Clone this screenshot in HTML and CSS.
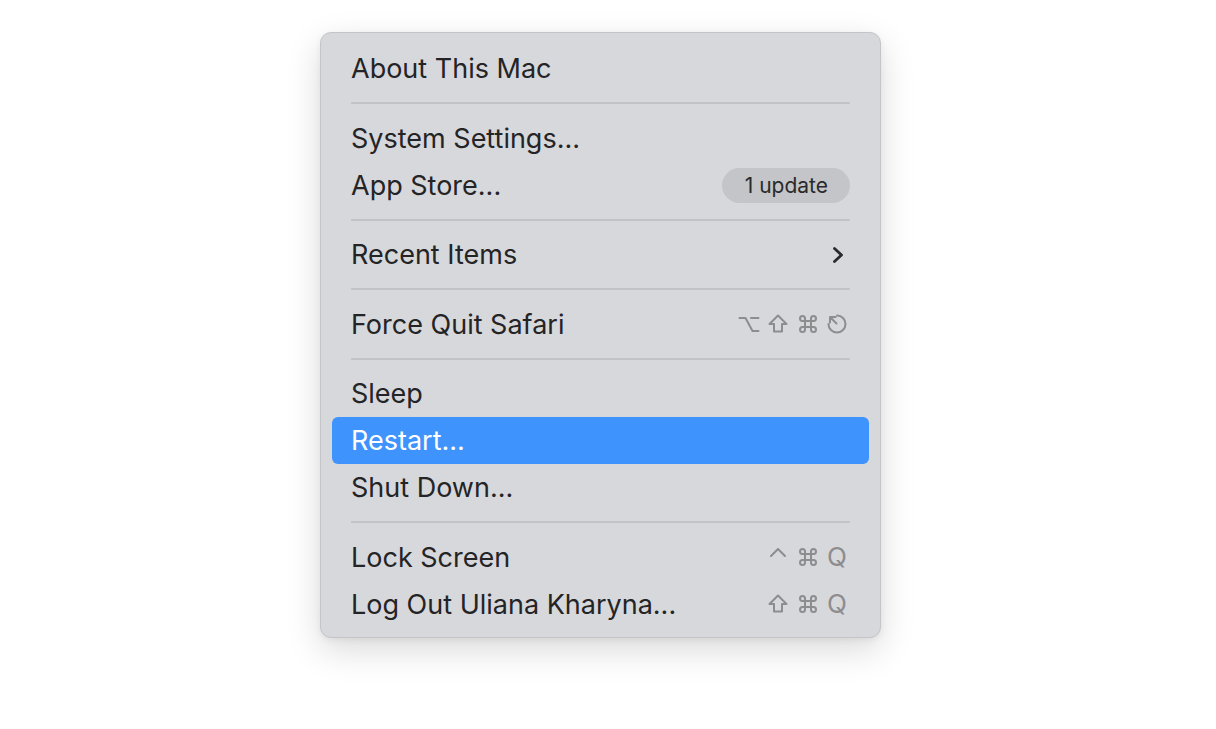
FILE: index.html
```html
<!DOCTYPE html>
<html lang="en">
<head>
<meta charset="utf-8">
<title>Apple menu</title>
<link rel="stylesheet" href="styles.css">
</head>
<body>
<div class="stage">
  <div class="menu">
    <div class="item"><span class="label">About This Mac</span></div>
    <div class="sep"></div>
    <div class="item"><span class="label">System Settings...</span></div>
    <div class="item"><span class="label">App Store...</span><span class="badge">1 update</span></div>
    <div class="sep"></div>
    <div class="item"><span class="label">Recent Items</span>
      <svg class="chev" viewBox="0 0 14 18"><path d="M3.5 2.5 L10.5 9 L3.5 15.5"/></svg>
    </div>
    <div class="sep"></div>
    <div class="item"><span class="label">Force Quit Safari</span>
      <span class="keys">
        <svg class="key" viewBox="0 0 22 22"><path d="M1.5 5 H7.5 L14.5 18 H20.5 M13 5 H20.5"/></svg>
        <svg class="key" viewBox="0 0 22 22"><path d="M11 2.5 L2.5 11 H7 V18.5 H15 V11 H19.5 Z"/></svg>
        <svg class="key" viewBox="0 0 22 22"><path d="M8 8 H5.5 A2.5 2.5 0 1 1 8 5.5 V16.5 A2.5 2.5 0 1 1 5.5 14 H16.5 A2.5 2.5 0 1 1 14 16.5 V5.5 A2.5 2.5 0 1 1 16.5 8 Z"/></svg>
        <svg class="key" viewBox="0 0 22 22"><path d="M11 2.5 A8.5 8.5 0 1 1 2.5 11 M4 4 L10.5 10.5 M4 4 H9.5 M4 4 V9.5"/></svg>
      </span>
    </div>
    <div class="sep"></div>
    <div class="item"><span class="label">Sleep</span></div>
    <div class="item active"><span class="label">Restart...</span></div>
    <div class="item"><span class="label">Shut Down...</span></div>
    <div class="sep"></div>
    <div class="item"><span class="label">Lock Screen</span>
      <span class="keys">
        <svg class="key" viewBox="0 0 22 22"><path d="M4 10 L11 3 L18 10"/></svg>
        <svg class="key" viewBox="0 0 22 22"><path d="M8 8 H5.5 A2.5 2.5 0 1 1 8 5.5 V16.5 A2.5 2.5 0 1 1 5.5 14 H16.5 A2.5 2.5 0 1 1 14 16.5 V5.5 A2.5 2.5 0 1 1 16.5 8 Z"/></svg>
        <span class="qkey">Q</span>
      </span>
    </div>
    <div class="item"><span class="label">Log Out Uliana Kharyna...</span>
      <span class="keys">
        <svg class="key" viewBox="0 0 22 22"><path d="M11 2.5 L2.5 11 H7 V18.5 H15 V11 H19.5 Z"/></svg>
        <svg class="key" viewBox="0 0 22 22"><path d="M8 8 H5.5 A2.5 2.5 0 1 1 8 5.5 V16.5 A2.5 2.5 0 1 1 5.5 14 H16.5 A2.5 2.5 0 1 1 14 16.5 V5.5 A2.5 2.5 0 1 1 16.5 8 Z"/></svg>
        <span class="qkey">Q</span>
      </span>
    </div>
  </div>
</div>
</body>
</html>
```

FILE: styles.css
```css
html, body {
  margin: 0;
  padding: 0;
  background: #ffffff;
}

.stage {
  min-height: 729px;
  box-sizing: border-box;
  padding: 32px 0 0 320px;
  font-family: Inter, "Liberation Sans", sans-serif;
}

.menu {
  width: 561px;
  box-sizing: border-box;
  background: #d7d8db;
  border: 1px solid #c4c5c8;
  border-radius: 11px;
  padding: 12px 11px 9px 11px;
  box-shadow: 0 12px 34px rgba(0, 0, 0, 0.15), 0 2px 6px rgba(0, 0, 0, 0.06);
}

.item {
  height: 47px;
  display: flex;
  align-items: center;
  justify-content: space-between;
  padding: 0 19px;
  border-radius: 6px;
  color: #242426;
  font-size: 27px;
}

.item.active {
  background: #3f93fc;
  color: #ffffff;
}

.label {
  white-space: nowrap;
}

.sep {
  height: 22.5px;
  display: flex;
  align-items: center;
  padding: 0 19px;
}

.sep::before {
  content: "";
  display: block;
  flex: 1;
  height: 2px;
  background: #c2c3c6;
}

.badge {
  background: #c4c5c8;
  color: #2a2a2c;
  font-size: 21px;
  height: 35px;
  line-height: 35px;
  padding: 0 22px 0 23px;
  border-radius: 18px;
}

.chev {
  width: 14px;
  height: 18px;
  fill: none;
  stroke: #2a2a2c;
  stroke-width: 2.8;
  stroke-linecap: round;
  stroke-linejoin: round;
  margin-right: 5px;
}

.keys {
  display: flex;
  align-items: center;
  gap: 7.5px;
  margin-right: 2px;
}

.key {
  width: 22px;
  height: 22px;
  fill: none;
  stroke: #8d8d90;
  stroke-width: 2;
  stroke-linecap: round;
  stroke-linejoin: round;
}

.qkey {
  width: 22px;
  text-align: center;
  color: #8d8d90;
  font-size: 26px;
  line-height: 22px;
}
```
